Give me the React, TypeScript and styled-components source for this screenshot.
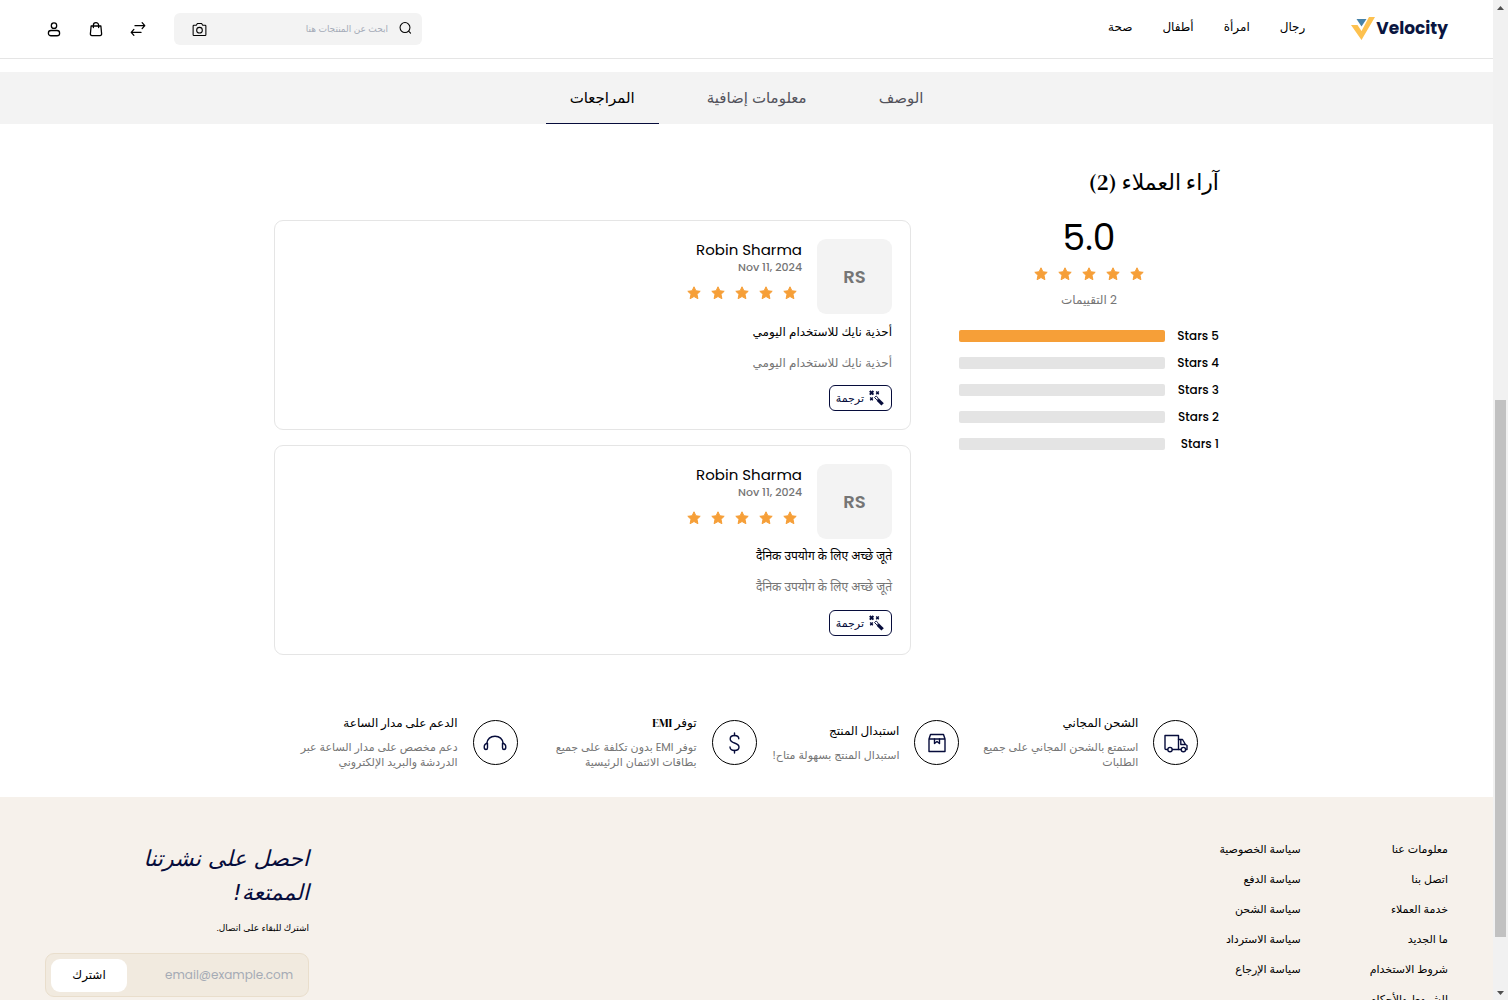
import React from "react";
import styled, { createGlobalStyle } from "styled-components";

const sans = `Poppins, Inter, "DejaVu Sans", sans-serif`;
const serif = `"DM Serif Display", "Liberation Serif", "DejaVu Sans", serif`;
const navy = "#060c3b";
const ink = "#000000";
const muted = "#757575";
const line = "#e5e5e5";
const surface = "#f3f3f3";
const amber = "#f69f38";

const GlobalStyle = createGlobalStyle`
  *, *::before, *::after { box-sizing: border-box; }
  body { margin: 0; background: #fff; color: ${ink}; font-family: ${sans}; font-size: 12px; }
  h1, h2, h3, p, ul { margin: 0; padding: 0; font-weight: 400; }
  ul { list-style: none; }
  a { color: inherit; text-decoration: none; }
  button { font-family: inherit; color: inherit; border: 0; padding: 0; background: none; cursor: pointer; }
  input { font-family: inherit; border: 0; outline: 0; background: none; min-width: 0; }
  svg { display: block; flex: none; }
`;

const Shell = styled.div`
  display: flex;
  height: 100vh;
  overflow: hidden;
`;

const Viewport = styled.div`
  flex: 1;
  min-width: 0;
  display: flex;
  flex-direction: column;
`;

const Scroller = styled.div`
  flex: 1;
  min-height: 0;
  overflow-y: auto;
  scrollbar-width: none;
  padding-top: 13px;
`;

const Rail = styled.div`
  width: 15px;
  background: #f1f1f1;
  display: grid;
  grid-template-rows: 15px 385fr 537fr 48fr 15px;
  justify-items: center;
  align-items: center;
`;

const Thumb = styled.div`
  grid-row: 3;
  width: 11px;
  height: 100%;
  background: #c1c1c1;
`;

const Arrow = styled.svg<{ $row: number }>`
  grid-row: ${(p) => p.$row};
`;

const Header = styled.header`
  display: flex;
  justify-content: space-between;
  align-items: center;
  padding: 0 45px;
  height: 59px;
  border-bottom: 1px solid ${line};
`;

const HeaderSide = styled.div<{ $gap: number }>`
  display: flex;
  align-items: center;
  gap: ${(p) => p.$gap}px;
`;

const Logo = styled.a`
  display: flex;
  align-items: center;
  direction: ltr;
  gap: 1px;
  padding-bottom: 2px;
  color: #0a1540;
  font-size: 17px;
  font-weight: 700;
  line-height: 24px;
`;

const Nav = styled.nav`
  display: flex;
  gap: 30px;
  line-height: 18px;
  padding-bottom: 4px;
`;

const Search = styled.form`
  display: flex;
  align-items: center;
  width: 248px;
  height: 32px;
  padding: 0 10px 0 17px;
  gap: 10px;
  border-radius: 6px;
  background: ${surface};

  input {
    flex: 1;
    padding: 0;
    font-size: 9px;
    &::placeholder { color: #a5abb8; opacity: 1; }
  }
`;

const Actions = styled.div`
  display: flex;
  gap: 24px;
`;

const Tabs = styled.div`
  display: flex;
  justify-content: center;
  gap: 24px;
  height: 52px;
  background: ${surface};
`;

const Tab = styled.button<{ $active?: boolean }>`
  padding: 0 24px;
  font-size: 15px;
  color: ${(p) => (p.$active ? ink : "#52525b")};
  border-bottom: 1px solid ${(p) => (p.$active ? navy : "transparent")};
`;

const Reviews = styled.section`
  max-width: 945px;
  margin: 0 auto;
  padding-top: 41px;
`;

const SectionTitle = styled.h2`
  font-family: ${serif};
  font-size: 22px;
  line-height: 34px;
  margin-bottom: 21px;
`;

const Columns = styled.div`
  display: flex;
  gap: 48px;
`;

const Summary = styled.aside`
  flex: 0 0 260px;
`;

const Overall = styled.div`
  display: flex;
  flex-direction: column;
  align-items: center;
`;

const Score = styled.p`
  font-size: 36px;
  line-height: 36px;
  margin-bottom: 6px;
`;

const Count = styled.p`
  color: ${muted};
  line-height: 18px;
  margin: 5px 0 18px;
`;

const StarRow = styled.div`
  display: flex;
  color: ${amber};
`;

const Bars = styled.ul`
  display: grid;
  gap: 9px;
`;

const Bar = styled.li`
  display: grid;
  grid-template-columns: 42px 1fr;
  gap: 12px;
  align-items: center;
  line-height: 18px;
  font-weight: 500;
  white-space: nowrap;
`;

const Track = styled.div`
  height: 12px;
  border-radius: 2px;
  background: #e4e4e4;
  overflow: hidden;
`;

const Fill = styled.div`
  height: 100%;
  background: ${amber};
`;

const Cards = styled.div`
  flex: 1;
  display: grid;
  gap: 15px;
`;

const Card = styled.article`
  padding: 18px;
  border: 1px solid ${line};
  border-radius: 9px;
`;

const Author = styled.div`
  display: flex;
  gap: 15px;
  margin-bottom: 9px;
`;

const Avatar = styled.div`
  display: grid;
  place-items: center;
  width: 75px;
  height: 75px;
  border-radius: 9px;
  background: ${surface};
  color: ${muted};
  font-size: 18px;
  font-weight: 600;
`;

const Name = styled.h3`
  font-size: 15px;
  line-height: 22px;
`;

const DateText = styled.p`
  color: ${muted};
  font-size: 11px;
  font-weight: 500;
  line-height: 13px;
  margin-bottom: 7px;
  text-align: right;
`;

const ReviewText = styled.p<{ $muted?: boolean }>`
  color: ${(p) => (p.$muted ? muted : ink)};
  line-height: 18px;
  margin-bottom: 13px;

  &:lang(hi) { font-family: "Noto Sans Devanagari", "Noto Sans", sans-serif; }
`;

const Translate = styled.button`
  display: flex;
  align-items: center;
  gap: 5px;
  height: 26px;
  padding: 0 6px;
  border: 1px solid ${navy};
  border-radius: 6px;
  color: ${navy};
  font-size: 11px;
`;

const Services = styled.section`
  display: flex;
  justify-content: center;
  align-items: center;
  gap: 16px;
  height: 57px;
  margin: 59px 0 26px;
`;

const Service = styled.div`
  display: flex;
  align-items: center;
  gap: 15px;
`;

const Ring = styled.div`
  display: grid;
  place-items: center;
  width: 45px;
  height: 45px;
  border: 1px solid ${ink};
  border-radius: 50%;
  color: ${navy};
`;

const ServiceText = styled.div`
  max-width: 163px;
`;

const ServiceTitle = styled.h3`
  font-family: ${serif};
  font-size: 12px;
  line-height: 18px;
  margin-bottom: 8px;
`;

const ServiceNote = styled.p`
  color: ${muted};
  font-size: 11px;
  line-height: 15px;
  padding-bottom: 1px;
`;

const Footer = styled.footer`
  display: flex;
  justify-content: space-between;
  align-items: flex-start;
  padding: 45px;
  background: #f6f1eb;
`;

const FooterLinks = styled.div`
  display: flex;
  gap: 69px;
`;

const LinkList = styled.ul`
  display: grid;
  align-content: start;
  gap: 15px;
  font-size: 11px;
  line-height: 15px;
`;

const Newsletter = styled.form`
  width: 264px;
`;

const NewsTitle = styled.h2`
  max-width: 200px;
  color: ${navy};
  font-family: "DejaVu Sans", sans-serif;
  font-size: 22px;
  font-style: italic;
  line-height: 34px;
`;

const NewsNote = styled.label`
  display: block;
  font-size: 9px;
  line-height: 18px;
  margin: 9px 0 16px;
`;

const MailBox = styled.div`
  display: flex;
  align-items: center;
  height: 44px;
  padding: 0 15px 0 5px;
  border: 1px solid #e9decc;
  border-radius: 9px;
  background: #f1eadf;

  input {
    flex: 1;
    padding: 0;
    font-size: 12px;
    &::placeholder { color: #a5abb5; opacity: 1; }
  }
`;

const Subscribe = styled.button`
  width: 76px;
  height: 33px;
  border-radius: 9px;
  background: #fff;
  font-size: 12px;
`;

const Icon = ({ size = 18, sw = 1.5, children }: { size?: number; sw?: number; children: React.ReactNode }) => (
  <svg width={size} height={size} viewBox="0 0 24 24" fill="none" stroke="currentColor" strokeWidth={sw} strokeLinecap="round" strokeLinejoin="round" aria-hidden="true">
    {children}
  </svg>
);

const Stars = () => (
  <StarRow role="img" aria-label="5 / 5">
    {[1, 2, 3, 4, 5].map((n) => (
      <svg key={n} width="24" height="24" viewBox="0 0 24 24" fill="currentColor" stroke="currentColor" strokeWidth="1" strokeLinejoin="round">
        <path d="M12 5.800l1.900 4 4.300.5-3.200 3 .9 4.400-3.900-2.200-3.900 2.200.9-4.400-3.200-3 4.300-.5z" />
      </svg>
    ))}
  </StarRow>
);

const Wand = () => (
  <svg width="16" height="16" viewBox="0 0 16 16" fill="none" stroke="currentColor" aria-hidden="true">
    <path d="M8.800 9.600l4.800 4.800" strokeWidth="3.400" />
    <path d="M7.200 6l2.200 2.200-1.600 1.600L5.600 7.600z" strokeWidth="1" />
    <path d="M.8 1l3.600 3.600M4.400 1L.8 4.600" strokeWidth="2" />
    <path d="M7.200 1.600l2.600 2.600M9.800 1.600L7.200 4.200M1.200 7.600l2.600 2.600M3.800 7.600l-2.600 2.600" strokeWidth="1.400" />
  </svg>
);

const reviews = [
  { id: 1, lang: "ar", text: "أحذية نايك للاستخدام اليومي" },
  { id: 2, lang: "hi", text: "दैनिक उपयोग के लिए अच्छे जूते" },
];

const services = [
  {
    title: "الشحن المجاني",
    note: "استمتع بالشحن المجاني على جميع الطلبات",
    icon: (
      <>
        <path d="M3.500 18.500H2a1 1 0 0 1-1-1V4.500h13.500v14H8.500" />
        <path d="M14.500 8.500h4l3 5 1.500 1v4h-1M14.500 18.500H17M16.800 8.500v5h4.700" />
        <circle cx="6" cy="18.600" r="2.200" />
        <circle cx="19.400" cy="18.600" r="2.200" />
      </>
    ),
  },
  {
    title: "استبدال المنتج",
    note: "استبدال المنتج بسهولة متاح!",
    icon: (
      <>
        <path d="M4 8v12.500h16V8zM4 8l1.500-4.500h13L20 8" />
        <path d="M9.500 8v4.500l2.500-2 2.500 2V8" />
      </>
    ),
  },
  {
    title: "توفر EMI",
    note: "توفر EMI بدون تكلفة على جميع بطاقات الائتمان الرئيسية",
    icon: (
      <>
        <path d="M12.500 2v2.500M12.500 19.500V22" />
        <path d="M16.800 7.800c0-2-1.900-3.300-4.300-3.300S8.200 5.800 8.200 8s1.900 3.200 4.300 4 4.500 1.700 4.500 4-2 3.500-4.500 3.500S8 18.200 8 16" />
      </>
    ),
  },
  {
    title: "الدعم على مدار الساعة",
    note: "دعم مخصص على مدار الساعة عبر الدردشة والبريد الإلكتروني",
    icon: (
      <>
        <path d="M3.800 12.500C4.500 8 7.800 5.300 12 5.300s7.500 2.700 8.200 7.200" />
        <path d="M4.500 12.200c-1.800.3-3.300 1.800-3.300 3.800s.6 2.500 1.800 2.500 1.500-.8 1.500-1.800zM19.500 12.200c1.800.3 3.300 1.800 3.300 3.800s-.6 2.500-1.800 2.500-1.500-.8-1.500-1.800z" />
      </>
    ),
  },
];

const linkColumns = [
  ["معلومات عنا", "اتصل بنا", "خدمة العملاء", "ما الجديد", "شروط الاستخدام", "الشروط والأحكام"],
  ["سياسة الخصوصية", "سياسة الدفع", "سياسة الشحن", "سياسة الاسترداد", "سياسة الإرجاع"],
];

export default function App() {
  return (
    <Shell>
      <GlobalStyle />
      <Viewport dir="rtl" lang="ar">
        <Header>
          <HeaderSide $gap={46}>
            <Logo href="#">
              <svg width="24" height="23" viewBox="0 0 24 23" aria-hidden="true">
                <path d="M0 8h6.500l4 6L18 0h6L10.500 23z" fill="#fdc14f" />
                <path d="M5.500 2h10l-5 7.500z" fill="#4682a9" />
              </svg>
              Velocity
            </Logo>
            <Nav>
              {["رجال", "امرأة", "أطفال", "صحة"].map((item) => (
                <a key={item} href="#">{item}</a>
              ))}
            </Nav>
          </HeaderSide>
          <HeaderSide $gap={27}>
            <Search role="search">
              <Icon size={14} sw={1.8}>
                <circle cx="12" cy="9.500" r="8.500" />
                <path d="M18.500 16l3 3" />
              </Icon>
              <input type="text" aria-label="ابحث عن المنتجات هنا" placeholder="ابحث عن المنتجات هنا" />
              <button type="button" aria-label="بحث بالصورة">
                <Icon size={17}>
                  <path d="M4 6h3.500L9 3.500h6L16.500 6H20a1 1 0 0 1 1 1v12.500a1 1 0 0 1-1 1H4a1 1 0 0 1-1-1V7a1 1 0 0 1 1-1z" />
                  <circle cx="12" cy="13" r="4" />
                </Icon>
              </button>
            </Search>
            <Actions>
              <button type="button" aria-label="مقارنة">
                <Icon sw={1.7}>
                  <path d="M8 7.500h13M17.500 3.500l3.500 4-3.500 4M16 16.500H3M6.500 12.500l-3.500 4 3.500 4" />
                </Icon>
              </button>
              <button type="button" aria-label="حقيبة التسوق">
                <Icon sw={1.7}>
                  <path d="M5.500 8h13l1 10.500a2 2 0 0 1-2 2.200H6.500a2 2 0 0 1-2-2.200zM8.500 10V7a3.500 3.500 0 0 1 7 0v3" />
                </Icon>
              </button>
              <button type="button" aria-label="الحساب">
                <Icon sw={1.7}>
                  <circle cx="12" cy="7.500" r="3.600" />
                  <rect x="4.500" y="14" width="15" height="7" rx="3.500" />
                </Icon>
              </button>
            </Actions>
          </HeaderSide>
        </Header>

        <Scroller>
          <Tabs role="tablist">
            <Tab role="tab" aria-selected={false}>الوصف</Tab>
            <Tab role="tab" aria-selected={false}>معلومات إضافية</Tab>
            <Tab role="tab" aria-selected $active>المراجعات</Tab>
          </Tabs>

          <Reviews>
            <SectionTitle>آراء العملاء (2)</SectionTitle>
            <Columns>
              <Summary>
                <Overall>
                  <Score>5.0</Score>
                  <Stars />
                  <Count>2 التقييمات</Count>
                </Overall>
                <Bars>
                  {[5, 4, 3, 2, 1].map((n) => (
                    <Bar key={n}>
                      <span>{`${n} Stars`}</span>
                      <Track><Fill style={{ width: n === 5 ? "100%" : "0%" }} /></Track>
                    </Bar>
                  ))}
                </Bars>
              </Summary>
              <Cards>
                {reviews.map((r) => (
                  <Card key={r.id}>
                    <Author>
                      <Avatar>RS</Avatar>
                      <div>
                        <Name>Robin Sharma</Name>
                        <DateText dir="ltr">Nov 11, 2024</DateText>
                        <Stars />
                      </div>
                    </Author>
                    <ReviewText lang={r.lang}>{r.text}</ReviewText>
                    <ReviewText lang={r.lang} $muted>{r.text}</ReviewText>
                    <Translate type="button">
                      <Wand />
                      ترجمة
                    </Translate>
                  </Card>
                ))}
              </Cards>
            </Columns>
          </Reviews>

          <Services>
            {services.map((s) => (
              <Service key={s.title}>
                <Ring><Icon size={24} sw={1.4}>{s.icon}</Icon></Ring>
                <ServiceText>
                  <ServiceTitle>{s.title}</ServiceTitle>
                  <ServiceNote>{s.note}</ServiceNote>
                </ServiceText>
              </Service>
            ))}
          </Services>

          <Footer>
            <FooterLinks>
              {linkColumns.map((column) => (
                <LinkList key={column[0]}>
                  {column.map((label) => (
                    <li key={label}><a href="#">{label}</a></li>
                  ))}
                </LinkList>
              ))}
            </FooterLinks>
            <Newsletter>
              <NewsTitle>احصل على نشرتنا الممتعة!</NewsTitle>
              <NewsNote htmlFor="email">اشترك للبقاء على اتصال.</NewsNote>
              <MailBox>
                <input id="email" type="text" placeholder="email@example.com" />
                <Subscribe type="button">اشترك</Subscribe>
              </MailBox>
            </Newsletter>
          </Footer>
        </Scroller>
      </Viewport>
      <Rail aria-hidden="true">
        <Arrow $row={1} width="7" height="4" viewBox="0 0 7 4"><path d="M0 4l3.500-4L7 4z" fill="#505050" /></Arrow>
        <Thumb />
        <Arrow $row={5} width="7" height="4" viewBox="0 0 7 4"><path d="M0 0l3.500 4L7 0z" fill="#505050" /></Arrow>
      </Rail>
    </Shell>
  );
}
